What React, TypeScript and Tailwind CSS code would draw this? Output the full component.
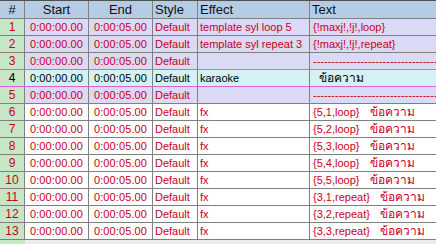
import React from "react";

type Row = {
  n: number;
  effect: string;
  text: React.ReactNode;
  kind: "comment" | "active" | "normal";
};

const TH = "ข้อความ";

const withTh = (s: string) => (
  <>
    {s}
    <span className="pl-[10px] text-[12px]">{TH}</span>
  </>
);

const DASH = "-------------------------------------------------------";

const rows: Row[] = [
  { n: 1, effect: "template syl loop 5", text: "{!maxj!,!j!,loop}", kind: "comment" },
  { n: 2, effect: "template syl repeat 3", text: "{!maxj!,!j!,repeat}", kind: "comment" },
  { n: 3, effect: "", text: DASH, kind: "comment" },
  { n: 4, effect: "karaoke", text: <span className="pl-[6px] text-[12px]">{TH}</span>, kind: "active" },
  { n: 5, effect: "", text: DASH, kind: "comment" },
  { n: 6, effect: "fx", text: withTh("{5,1,loop}"), kind: "normal" },
  { n: 7, effect: "fx", text: withTh("{5,2,loop}"), kind: "normal" },
  { n: 8, effect: "fx", text: withTh("{5,3,loop}"), kind: "normal" },
  { n: 9, effect: "fx", text: withTh("{5,4,loop}"), kind: "normal" },
  { n: 10, effect: "fx", text: withTh("{5,5,loop}"), kind: "normal" },
  { n: 11, effect: "fx", text: withTh("{3,1,repeat}"), kind: "normal" },
  { n: 12, effect: "fx", text: withTh("{3,2,repeat}"), kind: "normal" },
  { n: 13, effect: "fx", text: withTh("{3,3,repeat}"), kind: "normal" },
];

export default function App() {
  return (
    <div
      className="w-[436px] h-[244px] overflow-hidden bg-[#ececec] text-[11px] leading-none"
      style={{ fontFamily: '"Liberation Sans", "Noto Sans", sans-serif' }}
    >
      {/* header */}
      <div className="flex h-[19px] border-t border-t-[#505050] border-b border-b-[#808080] bg-[#b4cce4] text-[#101010] text-[13px]">
        <div className="w-[25px] shrink-0 border-r border-r-[#808080] flex items-center justify-center">#</div>
        <div className="w-[64px] shrink-0 border-r border-r-[#808080] flex items-center justify-center">Start</div>
        <div className="w-[64px] shrink-0 border-r border-r-[#808080] flex items-center justify-center">End</div>
        <div className="w-[45px] shrink-0 border-r border-r-[#808080] flex items-center pl-[2px]">Style</div>
        <div className="w-[112px] shrink-0 border-r border-r-[#808080] flex items-center pl-[2px]">Effect</div>
        <div className="flex-1 flex items-center pl-[2px]">Text</div>
      </div>
      {rows.map((r, i) => {
        const bg =
          r.kind === "comment" ? "bg-[#dadaf4]" : r.kind === "active" ? "bg-[#d4f2f4]" : "bg-white";
        const color = r.kind === "active" ? "text-[#000000]" : "text-[#c8001a]";
        const pinkBottom = r.n === 3 || r.n === 4;
        const border = pinkBottom ? "border-b-[#e060d0]" : "border-b-[#808080]";
        return (
          <div key={i} className={`flex h-[17px] border-b ${border} ${color}`}>
            <div className="w-[25px] shrink-0 border-r border-r-[#808080] bg-[#c6e6c6] flex items-center justify-center text-[12px]">
              {r.n}
            </div>
            <div className={`w-[64px] shrink-0 border-r border-r-[#808080] ${bg} flex items-center justify-center tracking-[0.1px]`}>
              0:00:00.00
            </div>
            <div className={`w-[64px] shrink-0 border-r border-r-[#808080] ${bg} flex items-center justify-center tracking-[0.1px]`}>
              0:00:05.00
            </div>
            <div className={`w-[45px] shrink-0 border-r border-r-[#808080] ${bg} flex items-center pl-[2px]`}>
              Default
            </div>
            <div className={`w-[112px] shrink-0 border-r border-r-[#808080] ${bg} flex items-center pl-[2px] whitespace-nowrap overflow-hidden`}>
              {r.effect}
            </div>
            <div className={`flex-1 ${bg} flex items-center pl-[3px] whitespace-nowrap overflow-hidden`}>
              {r.text}
            </div>
          </div>
        );
      })}
      <div className="flex h-[10px]">
        <div className="w-[25px] bg-[#c6e6c6]" />
      </div>
    </div>
  );
}
